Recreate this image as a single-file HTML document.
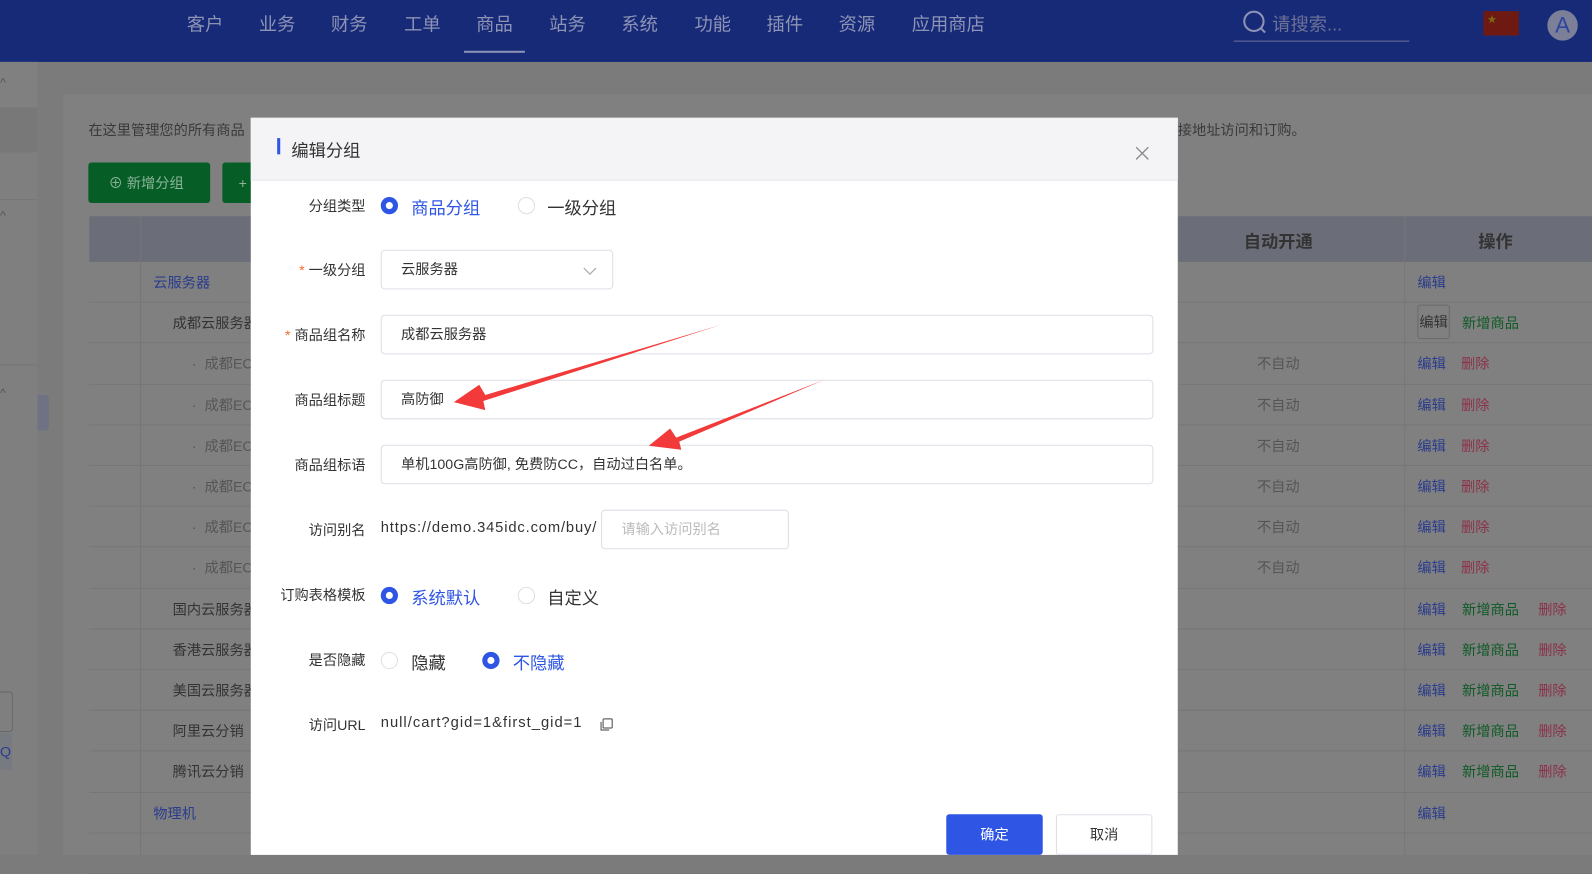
<!DOCTYPE html>
<html><head><meta charset="utf-8"><style>
*{margin:0;padding:0;box-sizing:border-box}
body{width:1592px;height:842px;overflow:hidden;position:relative;background:#7b7b7b;font-family:"Liberation Sans","Noto Sans CJK SC",sans-serif;font-size:14px;color:#3a3a3a}
#w{position:absolute;left:0;top:0;width:1568px;height:830px;transform:scale(1.01531);transform-origin:0 0}
.abs{position:absolute}
.hdr{left:0;top:0;width:1568px;height:61px;background:#172a78}
.nav{top:10px;font-size:18px;color:#8d93b5}
.side{left:0;top:61px;width:37px;height:781px;background:#7f7f7f}
.card{left:62px;top:93px;width:1530px;height:749px;background:#808080}
.row{position:absolute;left:88px;width:1480px;height:40.2px;border-bottom:1px solid #767676}
.row span{position:absolute;top:10px;white-space:nowrap}
.b{color:#2a3c8c}.g{color:#0f5a26}.r{color:#8b3148}.k{color:#333}.d{color:#555}
.modal{left:247px;top:116px;width:913px;height:726px;background:#fff}
.mh{left:0;top:0;width:913px;height:62px;background:#f4f4f6;border-bottom:1px solid #e8e8ee}
.lab{position:absolute;right:800px;font-size:14px;color:#333;white-space:nowrap}
.inp{position:absolute;border:1px solid #dcdfe6;border-radius:4px;height:39px;padding:0 19px;line-height:37px;font-size:14px;color:#333;background:#fff}
.rad{position:absolute;width:17px;height:17px;border-radius:50%;border:1px solid #dcdfe6}
.rad.on{border:5px solid #2f55e4;background:#fff}
.rt{position:absolute;font-size:17px;white-space:nowrap}
</style></head><body><div id="w">
<div class="abs hdr"></div>
<div class="abs nav" style="left:184px">客户</div>
<div class="abs nav" style="left:255px">业务</div>
<div class="abs nav" style="left:326px">财务</div>
<div class="abs nav" style="left:398px">工单</div>
<div class="abs nav" style="left:469px">商品</div>
<div class="abs" style="left:457px;top:50px;width:60px;height:2px;background:#8d93b5"></div>
<div class="abs nav" style="left:541px">站务</div>
<div class="abs nav" style="left:612px">系统</div>
<div class="abs nav" style="left:684px">功能</div>
<div class="abs nav" style="left:755px">插件</div>
<div class="abs nav" style="left:826px">资源</div>
<div class="abs nav" style="left:898px">应用商店</div>
<svg class="abs" style="left:1224px;top:10px" width="24" height="24"><circle cx="11" cy="11" r="9.5" fill="none" stroke="#8d93b5" stroke-width="2"/><line x1="18" y1="18" x2="22" y2="22" stroke="#8d93b5" stroke-width="2"/></svg>
<div class="abs" style="left:1253px;top:10px;font-size:18px;color:#6c7196">请搜索...</div>
<div class="abs" style="left:1215px;top:40px;width:173px;height:1px;background:#6c7196"></div>
<div class="abs" style="left:1461px;top:11px;width:35px;height:24px;background:#6e1a12"><span style="position:absolute;left:4px;top:1px;color:#7d6a12;font-size:9px">★</span></div>
<div class="abs" style="left:1524px;top:10px;width:30px;height:30px;border-radius:50%;background:#7b7f98;color:#2e45a0;font-size:22px;text-align:center;line-height:30px">A</div>

<div class="abs side"></div>
<div class="abs" style="left:0;top:61px;width:37px;height:45px;background:#808080"></div>
<div class="abs" style="left:0;top:106px;width:37px;height:44px;background:#787878"></div>
<div class="abs" style="left:0;top:196px;width:37px;height:1px;background:#767676"></div>
<div class="abs" style="left:0;top:359px;width:37px;height:1px;background:#767676"></div>
<div class="abs" style="left:0;top:74px;color:#555;font-size:12px">^</div>
<div class="abs" style="left:0;top:205px;color:#555;font-size:12px">^</div>
<div class="abs" style="left:0;top:380px;color:#555;font-size:12px">^</div>
<div class="abs" style="left:37px;top:389px;width:11px;height:35px;background:#6e7282;border-radius:0 3px 3px 0"></div>
<div class="abs" style="left:0;top:681px;width:13px;height:40px;border:1px solid #666;border-left:none;border-radius:0 4px 4px 0"></div>
<div class="abs" style="left:0;top:722px;width:12px;height:36px;background:#787a82;color:#2a3c8c;line-height:36px;font-size:14px">Q</div>

<div class="abs card"></div>
<div class="abs" style="left:87px;top:118px;color:#3a3a3a">在这里管理您的所有商品</div>
<div class="abs" style="left:1160px;top:118px;color:#3a3a3a">接地址访问和订购。</div>
<div class="abs" style="left:87px;top:160px;width:120px;height:40px;background:#065e26;border-radius:3px;color:#8cb49a;line-height:40px;padding-left:20px">⊕ 新增分组</div>
<div class="abs" style="left:219px;top:160px;width:40px;height:40px;background:#065e26;border-radius:3px;color:#8cb49a;line-height:40px;padding-left:16px">+</div>
<div class="abs" style="left:88px;top:213px;width:1480px;height:45px;background:#6b6e78"></div>
<div class="abs" style="left:138px;top:213px;width:1px;height:629px;background:#767676"></div>
<div class="abs" style="left:1383px;top:213px;width:1px;height:629px;background:#767676"></div>
<div class="abs" style="left:1160px;top:213px;width:1px;height:45px;background:#767676"></div>
<div class="abs" style="left:1225px;top:224px;font-size:17px;font-weight:bold;color:#333">自动开通</div>
<div class="abs" style="left:1456px;top:224px;font-size:17px;font-weight:bold;color:#333">操作</div>

<div class="row" style="top:258px"><span class="b" style="left:63px">云服务器</span><span class="b" style="left:1308px">编辑</span></div>
<div class="row" style="top:298.2px"><span class="k" style="left:82px">成都云服务器</span><span class="k" style="left:1308px;top:2px;border:1px solid #6a6a6a;border-radius:3px;padding:6px 1px">编辑</span><span class="g" style="left:1352px">新增商品</span></div>
<div class="row" style="top:338.4px"><span class="d" style="left:101px">·&nbsp; 成都EC</span><span class="d" style="left:1150px">不自动</span><span class="b" style="left:1308px">编辑</span><span class="r" style="left:1351px">删除</span></div>
<div class="row" style="top:378.6px"><span class="d" style="left:101px">·&nbsp; 成都EC</span><span class="d" style="left:1150px">不自动</span><span class="b" style="left:1308px">编辑</span><span class="r" style="left:1351px">删除</span></div>
<div class="row" style="top:418.8px"><span class="d" style="left:101px">·&nbsp; 成都EC</span><span class="d" style="left:1150px">不自动</span><span class="b" style="left:1308px">编辑</span><span class="r" style="left:1351px">删除</span></div>
<div class="row" style="top:459px"><span class="d" style="left:101px">·&nbsp; 成都EC</span><span class="d" style="left:1150px">不自动</span><span class="b" style="left:1308px">编辑</span><span class="r" style="left:1351px">删除</span></div>
<div class="row" style="top:499.2px"><span class="d" style="left:101px">·&nbsp; 成都EC</span><span class="d" style="left:1150px">不自动</span><span class="b" style="left:1308px">编辑</span><span class="r" style="left:1351px">删除</span></div>
<div class="row" style="top:539.4px"><span class="d" style="left:101px">·&nbsp; 成都EC</span><span class="d" style="left:1150px">不自动</span><span class="b" style="left:1308px">编辑</span><span class="r" style="left:1351px">删除</span></div>
<div class="row" style="top:579.6px"><span class="k" style="left:82px">国内云服务器</span><span class="b" style="left:1308px">编辑</span><span class="g" style="left:1352px">新增商品</span><span class="r" style="left:1427px">删除</span></div>
<div class="row" style="top:619.8px"><span class="k" style="left:82px">香港云服务器</span><span class="b" style="left:1308px">编辑</span><span class="g" style="left:1352px">新增商品</span><span class="r" style="left:1427px">删除</span></div>
<div class="row" style="top:660px"><span class="k" style="left:82px">美国云服务器</span><span class="b" style="left:1308px">编辑</span><span class="g" style="left:1352px">新增商品</span><span class="r" style="left:1427px">删除</span></div>
<div class="row" style="top:700.2px"><span class="k" style="left:82px">阿里云分销</span><span class="b" style="left:1308px">编辑</span><span class="g" style="left:1352px">新增商品</span><span class="r" style="left:1427px">删除</span></div>
<div class="row" style="top:740.4px"><span class="k" style="left:82px">腾讯云分销</span><span class="b" style="left:1308px">编辑</span><span class="g" style="left:1352px">新增商品</span><span class="r" style="left:1427px">删除</span></div>
<div class="row" style="top:780.6px"><span class="b" style="left:63px">物理机</span><span class="b" style="left:1308px">编辑</span></div>
<div class="row" style="top:820.8px"></div>

<div class="abs modal">
 <div class="abs mh"></div>
 <div class="abs" style="left:26px;top:20px;width:3px;height:16px;background:#2f55e4"></div>
 <div class="abs" style="left:40px;top:18px;font-size:17px;color:#333">编辑分组</div>
 <svg class="abs" style="left:871px;top:28px" width="14" height="14"><path d="M1 1L13 13M13 1L1 13" stroke="#888" stroke-width="1.3"/></svg>

 <div class="lab" style="top:77px">分组类型</div>
 <div class="rad on" style="left:128px;top:78px"></div><div class="rt" style="left:158px;top:75px;color:#2f55e4">商品分组</div>
 <div class="rad" style="left:263px;top:78px"></div><div class="rt" style="left:292px;top:75px;color:#333">一级分组</div>

 <div class="lab" style="top:140px"><span style="color:#f56c2c">* </span>一级分组</div>
 <div class="inp" style="left:128px;top:130px;width:229px">云服务器</div>
 <svg class="abs" style="left:327px;top:147px" width="14" height="8"><path d="M1 1L7 7L13 1" fill="none" stroke="#aaa" stroke-width="1.2"/></svg>

 <div class="lab" style="top:204px"><span style="color:#f56c2c">* </span>商品组名称</div>
 <div class="inp" style="left:128px;top:194px;width:761px">成都云服务器</div>
 <div class="lab" style="top:268px">商品组标题</div>
 <div class="inp" style="left:128px;top:258px;width:761px">高防御</div>
 <div class="lab" style="top:332px">商品组标语</div>
 <div class="inp" style="left:128px;top:322px;width:761px">单机100G高防御, 免费防CC，自动过白名单。</div>

 <div class="lab" style="top:396px">访问别名</div>
 <div class="abs" style="left:128px;top:396px;color:#333;font-size:14.5px;letter-spacing:0.85px;white-space:nowrap">https://demo.345idc.com/buy/</div>
 <div class="inp" style="left:345px;top:386px;width:185px;color:#bbb">请输入访问别名</div>

 <div class="lab" style="top:460px">订购表格模板</div>
 <div class="rad on" style="left:128px;top:462px"></div><div class="rt" style="left:158px;top:459px;color:#2f55e4">系统默认</div>
 <div class="rad" style="left:263px;top:462px"></div><div class="rt" style="left:292px;top:459px;color:#333">自定义</div>

 <div class="lab" style="top:524px">是否隐藏</div>
 <div class="rad" style="left:128px;top:526px"></div><div class="rt" style="left:158px;top:523px;color:#333">隐藏</div>
 <div class="rad on" style="left:228px;top:526px"></div><div class="rt" style="left:258px;top:523px;color:#2f55e4">不隐藏</div>

 <div class="lab" style="top:588px">访问URL</div>
 <div class="abs" style="left:128px;top:588px;color:#333;font-size:14.5px;letter-spacing:1px;white-space:nowrap">null/cart?gid=1&amp;first_gid=1</div>
 <svg class="abs" style="left:343px;top:591px" width="14" height="14"><rect x="4" y="1" width="9" height="9" rx="1" fill="none" stroke="#666" stroke-width="1.2"/><path d="M2 4V12H10" fill="none" stroke="#666" stroke-width="1.2"/></svg>

 <div class="abs" style="left:685px;top:686px;width:95px;height:40px;background:#2f55e4;border-radius:3px;color:#fff;text-align:center;line-height:40px">确定</div>
 <div class="abs" style="left:793px;top:686px;width:95px;height:40px;border:1px solid #dcdfe6;border-radius:3px;color:#333;text-align:center;line-height:38px">取消</div>
</div>

<svg class="abs" style="left:0;top:0" width="1568" height="830">
 <polygon points="710,320 478,389 472,379 447,396 478,404 476,395" fill="#f23a3a"/>
 <polygon points="812,374 666,431 660,422 639,439 671,443 669,435" fill="#f23a3a"/>
</svg>
</div></body></html>
